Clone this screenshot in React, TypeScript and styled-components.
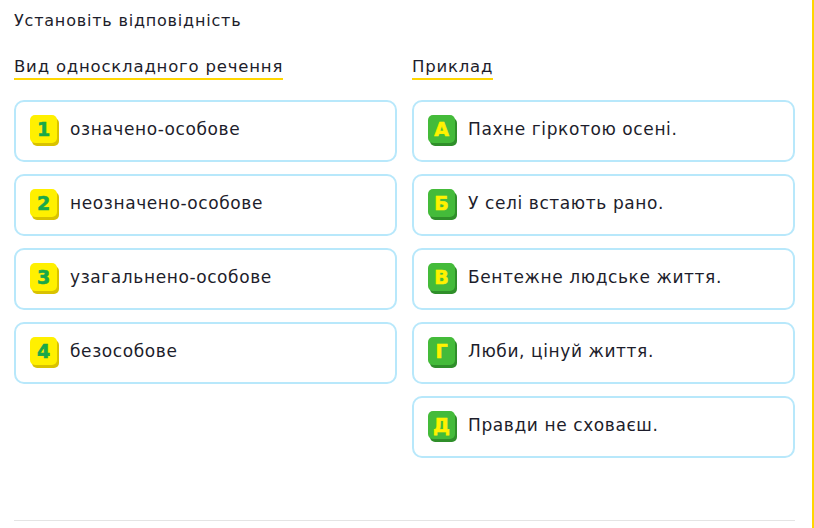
import React from "react";
import styled, { createGlobalStyle } from "styled-components";

const GlobalStyle = createGlobalStyle`
  html, body {
    margin: 0;
    padding: 0;
    background: #fff;
  }
  body {
    font-family: "DejaVu Sans", "Noto Sans", sans-serif;
    color: #1d1d2b;
  }
`;

type Item = { key: string; text: string };

const left: Item[] = [
  { key: "1", text: "означено-особове" },
  { key: "2", text: "неозначено-особове" },
  { key: "3", text: "узагальнено-особове" },
  { key: "4", text: "безособове" },
];

const right: Item[] = [
  { key: "А", text: "Пахне гіркотою осені." },
  { key: "Б", text: "У селі встають рано." },
  { key: "В", text: "Бентежне людське життя." },
  { key: "Г", text: "Люби, цінуй життя." },
  { key: "Д", text: "Правди не сховаєш." },
];

const App: React.FC = () => {
  return (
    <Page>
      <GlobalStyle />
      <Content>
        <Title>Установіть відповідність</Title>
        <Columns>
          <Column>
            <Heading>Вид односкладного речення</Heading>
            {left.map((el) => (
              <Card key={el.key}>
                <Badge variant="number">{el.key}</Badge>
                <CardText>{el.text}</CardText>
              </Card>
            ))}
          </Column>
          <Column>
            <Heading>Приклад</Heading>
            {right.map((el) => (
              <Card key={el.key}>
                <Badge variant="letter">{el.key}</Badge>
                <CardText>{el.text}</CardText>
              </Card>
            ))}
          </Column>
        </Columns>
        <Divider />
      </Content>
    </Page>
  );
};

const Page = styled.div`
  width: 812px;
  height: 528px;
  border-right: 2px solid #ffd600;
  box-sizing: content-box;
  display: flex;
`;

const Content = styled.div`
  width: 781px;
  padding: 11px 0 0 14px;
  display: flex;
  flex-direction: column;
`;

const Title = styled.div`
  font-size: 16px;
  line-height: 20px;
  letter-spacing: 0.8px;
  color: #1d1d2b;
`;

const Columns = styled.div`
  display: grid;
  grid-template-columns: 383px 383px;
  column-gap: 15px;
  margin-top: 26px;
`;

const Column = styled.div`
  display: flex;
  flex-direction: column;
  align-items: flex-start;
  gap: 12px;
`;

const Heading = styled.div`
  font-size: 16.5px;
  line-height: 20px;
  letter-spacing: 0.8px;
  padding-bottom: 1px;
  border-bottom: 2px solid #ffd600;
  margin-bottom: 8px;
`;

const Card = styled.div`
  box-sizing: border-box;
  width: 100%;
  height: 62px;
  border: 2px solid #b8e8fb;
  border-radius: 10px;
  display: flex;
  align-items: center;
  padding: 0 0 5px 14px;
  gap: 13px;
`;

const Badge = styled.div<{ variant: "number" | "letter" }>`
  width: 27px;
  height: 28px;
  border-radius: 5px;
  display: flex;
  align-items: center;
  justify-content: center;
  font-family: "DejaVu Sans", sans-serif;
  font-weight: 900;
  font-size: 19px;
  color: ${(p) => (p.variant === "number" ? "#18a84a" : "#fff200")};
  background: ${(p) => (p.variant === "number" ? "#fff000" : "#44bb3a")};
  box-shadow: 2px 3px 0 ${(p) => (p.variant === "number" ? "#d9c200" : "#2f8f2a")};
  -webkit-text-stroke: 0.6px currentColor;
  flex-shrink: 0;
`;

const CardText = styled.span`
  font-size: 17px;
  letter-spacing: 0.6px;
  color: #1d1d2b;
`;

const Divider = styled.div`
  margin-top: auto;
  margin-bottom: 7px;
  height: 1px;
  background: #e4e4e4;
`;

export default App;
